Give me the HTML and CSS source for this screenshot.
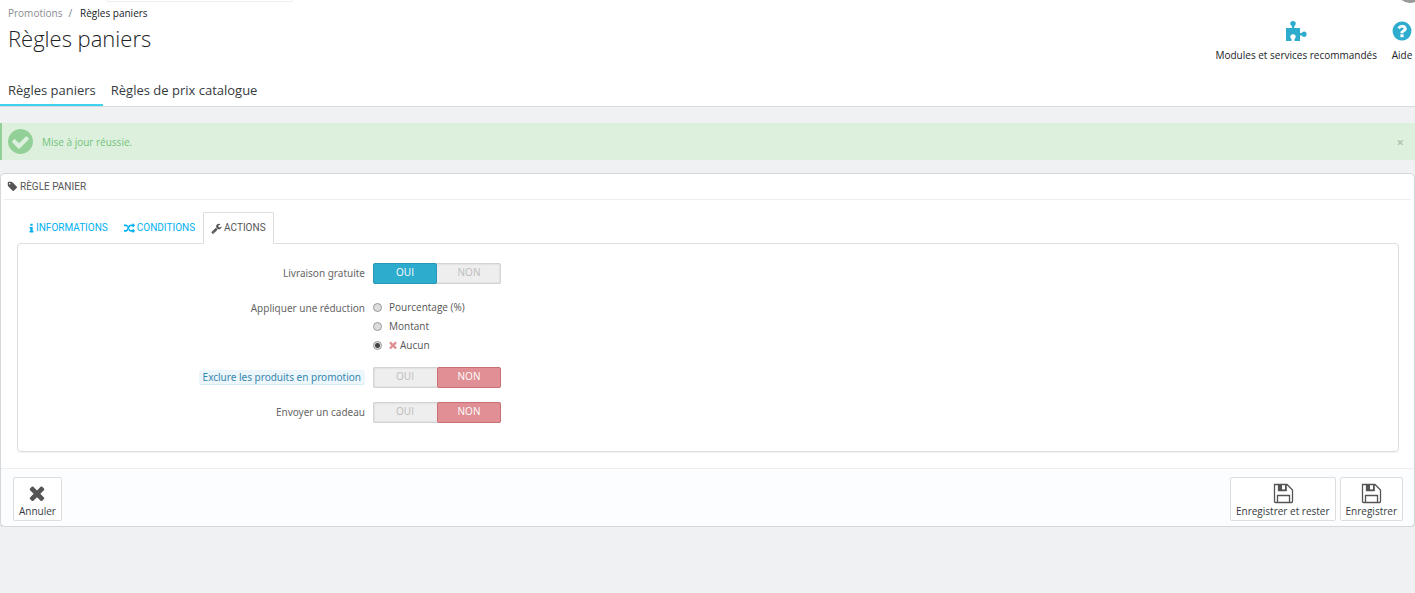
FILE: index.html
```html
<!DOCTYPE html>
<html lang="fr">
<head>
    <meta charset="UTF-8">
    <meta name="viewport" content="width=device-width, initial-scale=1.0">
    <title>Règles paniers</title>
    <link rel="stylesheet" href="styles.css">
</head>
<body>
    <!-- Page header -->
    <header class="page-head">
        <div class="search-edge"></div>
        <div class="avatar-edge"></div>
        <div class="head-row">
            <div class="head-title">
                <nav class="breadcrumb">
                    <a href="#">Promotions</a>
                    <span class="separator">/</span>
                    <a href="#" class="current">Règles paniers</a>
                </nav>
                <h1>Règles paniers</h1>
            </div>
            <div class="toolbar">
                <a href="#" class="toolbar-link">
                    <svg class="toolbar-icon" viewBox="0 0 22 22"><path d="M1 8h6V6.300Q5.200 5.200 5.200 3.500A2.800 2.600 0 0 1 10.800 3.500Q10.800 5.200 9.300 6.300V8H15v5h1.600Q17.400 11.500 19 11.500a2.600 2.700 0 0 1 0 5.400Q17.400 16.900 16.600 15.500H15V21H9.500v-2Q10.700 18 10.700 16.800a2.700 2.500 0 0 0-5.400 0Q5.300 18 6.500 19v2H1z"/></svg>
                    <span>Modules et services recommandés</span>
                </a>
                <a href="#" class="toolbar-link">
                    <svg class="toolbar-icon" viewBox="0 0 1792 1792"><path d="M1024 1376v-192q0-14-9-23t-23-9h-192q-14 0-23 9t-9 23v192q0 14 9 23t23 9h192q14 0 23-9t9-23zm256-672q0-88-55.500-163t-138.500-116-170-41q-243 0-371 213-15 24 8 42l132 100q7 6 19 6 16 0 25-12 53-68 86-92 34-24 86-24 48 0 85.500 26t37.500 59q0 38-20 61t-68 45q-63 28-115.500 86.500t-52.500 125.500v36q0 14 9 23t23 9h192q14 0 23-9t9-23q0-19 21.500-49.500t54.500-49.500q32-18 49-28.500t46-35 44.500-48 28-60.500 12.500-81zm384 192q0 209-103 385.500t-279.500 279.500-385.500 103-385.500-103-279.500-279.500-103-385.500 103-385.500 279.500-279.500 385.500-103 385.500 103 279.500 279.500 103 385.500z"/></svg>
                    <span>Aide</span>
                </a>
            </div>
        </div>
        <nav class="page-tabs">
            <a href="#" class="active">Règles paniers</a>
            <a href="#">Règles de prix catalogue</a>
        </nav>
    </header>

    <main>
        <div class="alert">
            <svg class="alert-icon" viewBox="128 128 1536 1536"><path d="M1412 734q0-28-18-46l-91-90q-19-19-45-19t-45 19l-408 407-226-226q-19-19-45-19t-45 19l-91 90q-18 18-18 46 0 27 18 45l362 362q19 19 45 19 27 0 46-19l543-543q18-18 18-45zm252 162q0 209-103 385.500t-279.500 279.500-385.500 103-385.500-103-279.500-279.500-103-385.500 103-385.500 279.500-279.500 385.500-103 385.500 103 279.500 279.500 103 385.500z"/></svg>
            <span>Mise à jour réussie.</span>
            <button type="button" class="close" aria-label="Fermer">×</button>
        </div>

        <form class="panel">
            <h2 class="panel-heading">
                <svg class="icon" viewBox="0 0 1792 1792"><path d="M576 448q0-53-37.500-90.500t-90.500-37.500-90.500 37.500-37.500 90.500 37.500 90.500 90.500 37.500 90.500-37.500 37.500-90.500zm1067 576q0 53-37 90l-491 492q-39 37-91 37-53 0-90-37l-715-716q-38-37-64.500-101t-26.500-117v-416q0-52 38-90t90-38h416q53 0 117 26.500t102 64.500l715 714q37 39 37 91z"/></svg>
                Règle panier
            </h2>

            <nav class="tabs">
                <a href="#">
                    <svg class="icon icon-info" viewBox="512 0 768 1792"><path d="M1216 1344v128q0 26-19 45t-45 19h-512q-26 0-45-19t-19-45v-128q0-26 19-45t45-19h64v-384h-64q-26 0-45-19t-19-45v-128q0-26 19-45t45-19h384q26 0 45 19t19 45v576h64q26 0 45 19t19 45zm-128-1152v192q0 26-19 45t-45 19h-256q-26 0-45-19t-19-45v-192q0-26 19-45t45-19h256q26 0 45 19t19 45z"/></svg>
                    Informations
                </a>
                <a href="#">
                    <svg class="icon" viewBox="0 0 1792 1792"><path d="M666 481q-60 92-137 273-22-45-37-72.500t-40.500-63.500-51-56.500-63-35-81.500-14.500h-224q-14 0-23-9t-9-23v-192q0-14 9-23t23-9h224q250 0 410 225zm1126 799q0 14-9 23l-320 320q-9 9-23 9-13 0-22.500-9.500t-9.500-22.500v-192q-32 0-85 .5t-81 1-73-1-71-5-64-10.500-63-18.500-58-28.500-59-40-55-53.500-56-69.500q59-93 136-273 22 45 37 72.500t40.500 63.500 51 56.500 63 35 81.500 14.500h256v-192q0-14 9-23t23-9q12 0 24 10l319 319q9 9 9 23zm0-896q0 14-9 23l-320 320q-9 9-23 9-13 0-22.500-9.500t-9.500-22.500v-192h-256q-48 0-87 15t-69 45-51 61.500-45 77.500q-32 62-78 171-29 66-49.500 111t-54 105-64 100-74 83-90 68.500-106.500 42-128 16.500h-224q-14 0-23-9t-9-23v-192q0-14 9-23t23-9h224q48 0 87-15t69-45 51-61.500 45-77.500q32-62 78-171 29-66 49.500-111t54-105 64-100 74-83 90-68.500 106.500-42 128-16.500h256v-192q0-14 9-23t23-9q12 0 24 10l319 319q9 9 9 23z"/></svg>
                    Conditions
                </a>
                <a href="#" class="active">
                    <svg class="icon" viewBox="0 0 1792 1792"><path d="M448 1472q0-26-19-45t-45-19-45 19-19 45 19 45 45 19 45-19 19-45zm644-420l-682 682q-37 37-90 37-52 0-91-37l-106-108q-38-36-38-90 0-53 38-91l681-681q39 98 114.500 173.500t173.500 114.500zm634-435q0 39-23 106-47 134-164.500 217.500t-258.500 83.500q-185 0-316.500-131.500t-131.500-316.500 131.500-316.500 316.500-131.500q58 0 121.500 16.500t107.500 46.500q16 11 16 28t-16 28l-293 169v224l193 107q5-3 79-48.500t135.500-81 70.500-35.500q15 0 23.500 10t8.500 25z"/></svg>
                    Actions
                </a>
            </nav>

            <div class="tab-content">
                <div class="form-row">
                    <div class="row-label" id="shipping-label">Livraison gratuite</div>
                    <div class="switch" role="radiogroup" aria-labelledby="shipping-label">
                        <input type="radio" name="shipping" id="shipping-on" checked>
                        <label for="shipping-on" class="yes">OUI</label>
                        <input type="radio" name="shipping" id="shipping-off">
                        <label for="shipping-off" class="no">NON</label>
                    </div>
                </div>
                <div class="form-row">
                    <div class="row-label" id="discount-label">Appliquer une réduction</div>
                    <div class="radios" role="radiogroup" aria-labelledby="discount-label">
                        <label><input type="radio" name="discount">Pourcentage (%)</label>
                        <label><input type="radio" name="discount">Montant</label>
                        <label><input type="radio" name="discount" checked><svg class="icon-none" viewBox="256 256 1280 1280"><path d="M1490 1322q0 40-28 68l-136 136q-28 28-68 28t-68-28l-294-294-294 294q-28 28-68 28t-68-28l-136-136q-28-28-28-68t28-68l294-294-294-294q-28-28-28-68t28-68l136-136q28-28 68-28t68 28l294 294 294-294q28-28 68-28t68 28l136 136q28 28 28 68t-28 68l-294 294 294 294q28 28 28 68z"/></svg>Aucun</label>
                    </div>
                </div>
                <div class="form-row">
                    <div class="row-label" id="exclude-label"><span class="hint">Exclure les produits en promotion</span></div>
                    <div class="switch" role="radiogroup" aria-labelledby="exclude-label">
                        <input type="radio" name="exclude" id="exclude-on">
                        <label for="exclude-on" class="yes">OUI</label>
                        <input type="radio" name="exclude" id="exclude-off" checked>
                        <label for="exclude-off" class="no">NON</label>
                    </div>
                </div>
                <div class="form-row">
                    <div class="row-label" id="gift-label">Envoyer un cadeau</div>
                    <div class="switch" role="radiogroup" aria-labelledby="gift-label">
                        <input type="radio" name="gift" id="gift-on">
                        <label for="gift-on" class="yes">OUI</label>
                        <input type="radio" name="gift" id="gift-off" checked>
                        <label for="gift-off" class="no">NON</label>
                    </div>
                </div>
            </div>

            <div class="panel-footer">
                <button type="button" class="btn">
                    <svg class="btn-icon" viewBox="0 0 1792 1792"><path d="M1490 1322q0 40-28 68l-136 136q-28 28-68 28t-68-28l-294-294-294 294q-28 28-68 28t-68-28l-136-136q-28-28-28-68t28-68l294-294-294-294q-28-28-28-68t28-68l136-136q28-28 68-28t68 28l294 294 294-294q28-28 68-28t68 28l136 136q28 28 28 68t-28 68l-294 294 294 294q28 28 28 68z"/></svg>
                    Annuler
                </button>
                <div class="btn-group">
                    <button type="submit" class="btn">
                        <svg class="btn-icon" viewBox="0 0 22 22"><path class="line" d="M2.500 2.500H15L20.500 8v11.500q0 1-1 1h-16q-1 0-1-1zM5.500 20v-6.500h12V20M6.500 3v5.500h7.500V3"/><path d="M6 3h4v6H6zM13 3h1.500v6H13zM6 7.500h8V9H6z"/></svg>
                        Enregistrer et rester
                    </button>
                    <button type="submit" class="btn">
                        <svg class="btn-icon" viewBox="0 0 22 22"><path class="line" d="M2.500 2.500H15L20.500 8v11.500q0 1-1 1h-16q-1 0-1-1zM5.500 20v-6.500h12V20M6.500 3v5.500h7.500V3"/><path d="M6 3h4v6H6zM13 3h1.500v6H13zM6 7.500h8V9H6z"/></svg>
                        Enregistrer
                    </button>
                </div>
            </div>
        </form>
    </main>
</body>
</html>
```
FILE: styles.css
```css
* {
    box-sizing: border-box;
}

body {
    margin: 0;
    background-color: #eff1f2;
    color: #363a41;
    font-family: "Open Sans", Arial, sans-serif;
    font-size: 10px;
    line-height: 14px;
}

a {
    color: inherit;
    text-decoration: none;
}

svg {
    fill: currentColor;
}

/* Page header */
.page-head {
    position: relative;
    overflow: hidden;
    background-color: #fff;
    border-bottom: 1px solid #d9dadb;
}

/* Bottom edges of the search box and avatar in the bar above */
.search-edge {
    position: absolute;
    top: -20px;
    left: 104px;
    width: 191px;
    height: 22px;
    border: 1px solid #eee;
    border-radius: 5px;
}

.avatar-edge {
    position: absolute;
    top: -23px;
    right: -8px;
    width: 26px;
    height: 26px;
    border-radius: 50%;
    background-color: #999;
}

.head-row {
    display: flex;
    justify-content: space-between;
    padding: 6px 2px 0 8px;
}

.breadcrumb {
    display: flex;
    gap: 6px;
    color: #202226;
}

.breadcrumb a:first-child {
    color: #8a8d91;
}

.breadcrumb .separator {
    color: #6c868e;
}

.breadcrumb .current {
    margin-left: 2px;
}

h1 {
    margin: 3px 0 0;
    color: #202226;
    font-size: 22px;
    line-height: 30px;
    font-weight: 300;
}

.toolbar {
    display: flex;
    gap: 14px;
    padding-top: 14px;
    color: #202226;
}

.toolbar-link {
    display: flex;
    flex-direction: column;
    align-items: center;
    gap: 6px;
}

.toolbar-icon {
    width: 22px;
    height: 22px;
    color: #2eacce;
}

.page-tabs {
    display: flex;
    margin-top: 14px;
    font-size: 13px;
    line-height: 18px;
}

.page-tabs a {
    padding: 5px 7px 5px 8px;
    border-bottom: 2px solid transparent;
}

.page-tabs .active {
    border-bottom-color: #3ed2f0;
}

/* Success message */
.alert {
    display: flex;
    align-items: center;
    gap: 9px;
    margin-top: 16px;
    padding: 6px 11px 6px 6px;
    border-left: 2px solid #92d097;
    background-color: #ddf0de;
    color: #72c279;
}

.alert-icon {
    width: 25px;
    height: 25px;
    color: #92d097;
}

.close {
    margin-left: auto;
    padding: 0;
    border: 0;
    background: none;
    color: #b0c4b2;
    font: bold 13px/14px "Open Sans", Arial, sans-serif;
    cursor: pointer;
}

/* Panel */
.panel {
    margin-top: 13px;
    border: 1px solid #d3d8db;
    border-radius: 5px;
    background-color: #fff;
    box-shadow: 0 1px 2px rgba(0, 0, 0, 0.1);
}

.panel-heading,
.tabs {
    font-family: Roboto, "Liberation Sans", sans-serif;
    font-size: 10px;
    font-weight: 400;
    text-transform: uppercase;
}

.panel-heading {
    display: flex;
    align-items: center;
    gap: 2px;
    height: 26px;
    margin: 0 3px;
    padding-left: 3px;
    border-bottom: 1px solid #eee;
    color: #555;
}

.icon {
    width: 11px;
    height: 11px;
}

.icon-info {
    width: 5px;
}

.tabs {
    display: flex;
    padding: 12px 20px 0;
    color: #00aff0;
}

.tabs a {
    display: flex;
    align-items: center;
    gap: 2px;
    height: 32px;
    padding: 0 7px;
    border: 1px solid transparent;
    border-radius: 2px 2px 0 0;
}

.tabs .active {
    z-index: 1;
    border-color: #ddd;
    border-bottom-color: #fff;
    background-color: #fff;
    color: #555;
}

.tab-content {
    display: flex;
    flex-direction: column;
    gap: 14px;
    margin: -1px 15px 16px 16px;
    padding: 19px 4px 28px;
    border: 1px solid #ddd;
    border-radius: 4px;
    box-shadow: 0 1px 1px rgba(0, 0, 0, 0.05);
}

.form-row {
    display: flex;
    gap: 8px;
}

.row-label {
    width: 25%;
    padding-top: 3px;
    color: #666;
    font-family: "Noto Sans", "Open Sans", sans-serif;
    text-align: right;
}

.hint {
    display: inline-block;
    padding: 0 4px;
    border-bottom: 1px solid #d5eaf5;
    border-radius: 3px;
    background-color: #edf7fb;
    color: #3586ae;
}

/* Yes / no switch */
.switch {
    display: flex;
    position: relative;
    width: 128px;
    height: 21px;
    border-radius: 2px;
    background-color: #eee;
    box-shadow: inset 0 0 2px 1px rgba(0, 0, 0, 0.15);
}

.switch input {
    position: absolute;
    opacity: 0;
}

.switch label {
    flex: 1;
    border: 1px solid transparent;
    border-radius: 2px;
    color: #bbb;
    line-height: 17px;
    text-align: center;
    cursor: pointer;
}

.switch input:checked + label {
    color: #fff;
}

.switch input:checked + .yes {
    border-color: #2799b7;
    background-color: #2eacce;
}

.switch input:checked + .no {
    border-color: #ca6f74;
    background-color: #e08f95;
}

.radios {
    display: flex;
    flex-direction: column;
    gap: 5px;
    padding-top: 2px;
}

.radios label {
    display: flex;
    align-items: center;
    color: #555;
}

.radios input {
    appearance: none;
    width: 9px;
    height: 9px;
    margin: 0 7px 0 0;
    border: 1px solid #999;
    border-radius: 50%;
    background-color: #ddd;
}

.radios input:checked {
    background-image: radial-gradient(circle, #444 0 2px, transparent 3px);
}

.icon-none {
    width: 8px;
    height: 8px;
    margin-right: 3px;
    color: #e08f95;
}

.form-row:nth-child(2) {
    padding-bottom: 1px;
}

/* Footer buttons */
.panel-footer {
    display: flex;
    justify-content: space-between;
    padding: 8px 11px 5px 12px;
    border-top: 1px solid #eee;
    border-radius: 0 0 5px 5px;
    background-color: #fcfdfe;
}

.btn-group {
    display: flex;
    gap: 4px;
}

.btn {
    display: flex;
    flex-direction: column;
    align-items: center;
    height: 44px;
    padding: 4px 5px 0;
    border: 1px solid #ddd;
    border-radius: 2px;
    background-color: #fff;
    color: #363a41;
    font: 10px/14px "Open Sans", Arial, sans-serif;
    cursor: pointer;
}

.btn-icon {
    width: 22px;
    height: 22px;
    color: #555;
}

.btn-icon .line {
    fill: none;
    stroke: currentColor;
    stroke-width: 1.3;
}
```
